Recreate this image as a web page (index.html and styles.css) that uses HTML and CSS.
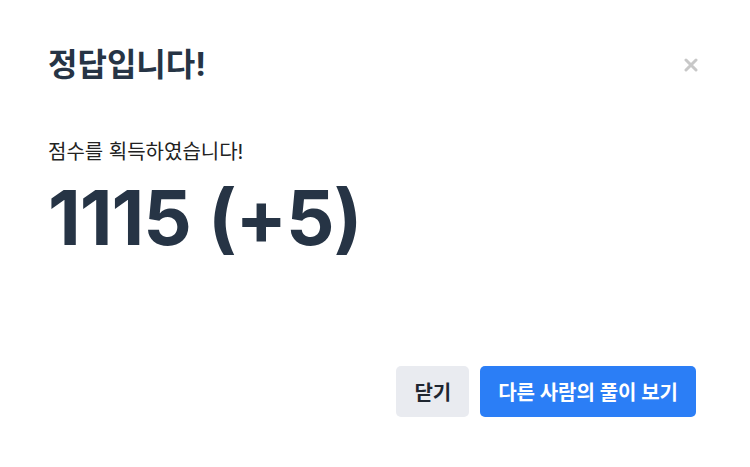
FILE: index.html
```html
<!DOCTYPE html>
<html lang="ko">
<head>
<meta charset="utf-8">
<link rel="stylesheet" href="styles.css">
</head>
<body>
<div class="modal">
  <div class="header">
    <h1 class="title">정답입니다!</h1>
    <button class="close" aria-label="닫기">
      <svg width="14" height="14" viewBox="0 0 14 14"><path d="M2 2L12 12M12 2L2 12" stroke="#c8c8c8" stroke-width="3" stroke-linecap="round"/></svg>
    </button>
  </div>
  <div class="body">
    <p class="msg">점수를 획득하였습니다!</p>
    <p class="score">1115 (+5)</p>
  </div>
  <div class="footer">
    <button class="btn btn-light">닫기</button>
    <button class="btn btn-primary">다른 사람의 풀이 보기</button>
  </div>
</div>
</body>
</html>
```
FILE: styles.css
```css
html, body {
  margin: 0;
  padding: 0;
  background: #fff;
}
body {
  font-family: "Inter", "Noto Sans CJK KR", sans-serif;
  color: #263445;
}
.modal {
  width: 750px;
  height: 467px;
  box-sizing: border-box;
  padding: 41px 54px 0 48px;
  display: flex;
  flex-direction: column;
}
.header {
  display: flex;
  justify-content: space-between;
  align-items: center;
}
.title {
  margin: 0;
  font-size: 32px;
  font-weight: 700;
  line-height: 48px;
}
.close {
  border: 0;
  background: none;
  padding: 0;
  margin-right: -2px;
  display: flex;
}
.body {
  padding-top: 49px;
}
.msg {
  margin: 0;
  font-size: 20px;
  line-height: 28px;
  color: #222;
}
.score {
  margin: 6px 0 0;
  font-size: 76px;
  font-weight: 700;
  line-height: 90px;
  letter-spacing: -1px;
}
.footer {
  margin-top: auto;
  margin-bottom: 50px;
  display: flex;
  justify-content: flex-end;
  gap: 11px;
}
.btn {
  height: 51px;
  border: 0;
  border-radius: 5px;
  padding: 0 18px;
  font-family: "Inter", "Noto Sans CJK KR", sans-serif;
  font-size: 20px;
  font-weight: 700;
}
.btn-light {
  background: #e9ebf0;
  color: #1f2630;
}
.btn-primary {
  background: #2b7ef6;
  color: #fff;
}
```
